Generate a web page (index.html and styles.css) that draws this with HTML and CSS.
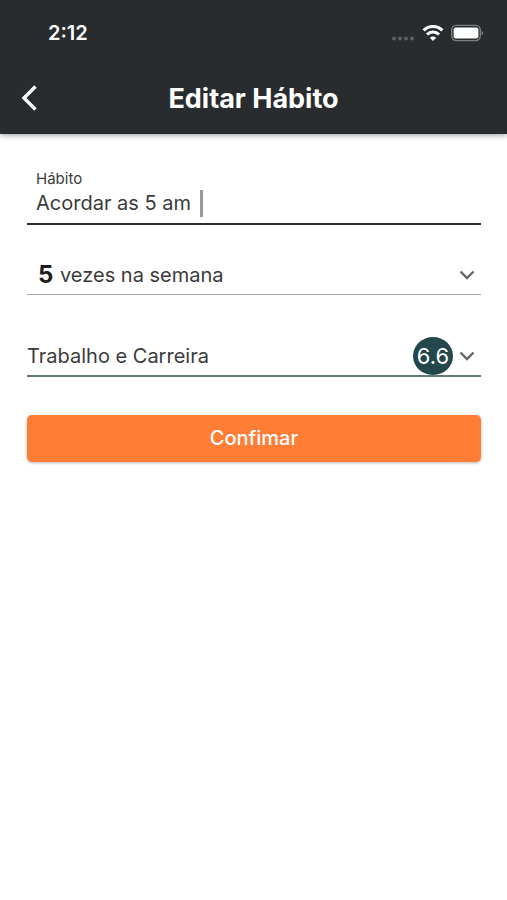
FILE: index.html
```html
<!DOCTYPE html>
<html lang="pt-BR">
<head>
    <meta charset="UTF-8">
    <meta name="viewport" content="width=device-width, initial-scale=1.0">
    <title>Editar Hábito</title>
    <link rel="stylesheet" href="styles.css">
</head>
<body>
    <header class="header">
        <div class="status-bar">
            <span class="time">2:12</span>
            <div class="status-icons">
                <svg width="24" height="18" viewBox="0 0 24 18" fill="#5c6062">
                    <circle cx="3" cy="14.5" r="2"/>
                    <circle cx="9" cy="14.5" r="2"/>
                    <circle cx="15" cy="14.5" r="2"/>
                    <circle cx="21" cy="14.5" r="2"/>
                </svg>
                <svg width="22" height="18" viewBox="0 0 22 18" fill="none" stroke="#fff" stroke-width="3.2">
                    <path d="M1.6 6.4a13.3 13.3 0 0 1 18.8 0"/>
                    <path d="M5 10.5a8.4 8.4 0 0 1 12 0"/>
                    <path d="M11 17l-3.1-3.2a4.4 4.4 0 0 1 6.2 0z" fill="#fff" stroke="none"/>
                </svg>
                <svg width="34" height="18" viewBox="0 0 34 18">
                    <rect x="0.7" y="1.4" width="28.6" height="15.2" rx="4.5" fill="none" stroke="#7b7e80" stroke-width="1.4"/>
                    <rect x="2.6" y="3.6" width="24.8" height="10.8" rx="2" fill="#fff"/>
                    <path d="M30.6 6.7c2.2.8 2.2 3.8 0 4.6z" fill="#7b7e80"/>
                </svg>
            </div>
        </div>
        <div class="title-bar">
            <button type="button" class="back" aria-label="Voltar">
                <svg width="18" height="28" viewBox="0 0 18 28" fill="none" stroke="#fff" stroke-width="3.4">
                    <path d="M15.5 2.5L4 14l11.5 11.5"/>
                </svg>
            </button>
            <h1>Editar Hábito</h1>
        </div>
    </header>

    <form class="habit-form">
        <div class="field field-name">
            <label for="habit">Hábito</label>
            <div class="input-row">
                <input type="text" id="habit" value="Acordar as 5 am">
                <span class="caret"></span>
            </div>
        </div>

        <div class="field field-times">
            <select id="times" aria-label="Quantidade">
                <option>1</option>
                <option>2</option>
                <option>3</option>
                <option>4</option>
                <option selected>5</option>
                <option>6</option>
                <option>7</option>
            </select>
            <label for="times" class="suffix">vezes na semana</label>
            <svg class="chevron" width="16" height="10" viewBox="0 0 16 10" fill="none" stroke="#666" stroke-width="2.4">
                <path d="M1.5 1.5L8 8l6.5-6.5"/>
            </svg>
        </div>

        <div class="field field-area">
            <select id="area" aria-label="Área">
                <option selected>Trabalho e Carreira</option>
            </select>
            <span class="score">6.6</span>
            <svg class="chevron" width="16" height="10" viewBox="0 0 16 10" fill="none" stroke="#666" stroke-width="2.4">
                <path d="M1.5 1.5L8 8l6.5-6.5"/>
            </svg>
        </div>

        <button type="submit" class="confirm">Confimar</button>
    </form>
</body>
</html>
```

FILE: styles.css
```css
* {
    box-sizing: border-box;
}
body {
    margin: 0;
    background: #fff;
    color: #3b3b3b;
    font-family: Inter, Roboto, sans-serif;
    font-size: 20px;
}
input, select, button {
    margin: 0;
    padding: 0;
    border: 0;
    outline: 0;
    background: none;
    color: inherit;
    font: inherit;
}
svg {
    display: block;
}

/* Header */
.header {
    background: #292c2e;
    color: #fff;
    box-shadow: 0 1px 6px rgba(0, 0, 0, 0.4);
}
.status-bar {
    display: flex;
    justify-content: space-between;
    align-items: center;
    height: 62px;
    padding: 4px 22px 0 48px;
}
.time {
    font-weight: 600;
}
.status-icons {
    display: flex;
    gap: 7px;
}
.title-bar {
    display: grid;
    grid-template-columns: 40px 1fr 40px;
    align-items: center;
    height: 72px;
    padding: 0 20px;
}
.back {
    cursor: pointer;
}
h1 {
    margin: 0;
    font-size: 27px;
    font-weight: 700;
    text-align: center;
}

/* Form */
.habit-form {
    display: flex;
    flex-direction: column;
    padding: 36px 26px 36px 27px;
}
.field-name {
    height: 55px;
    padding-left: 9px;
    border-bottom: 2px solid #292c2e;
}
.field-name label {
    display: block;
    font-size: 15px;
    line-height: 18px;
}
.input-row {
    display: flex;
    align-items: center;
    height: 30px;
}
.input-row input {
    field-sizing: content;
}
.caret {
    width: 3px;
    height: 27px;
    margin-left: 9px;
    background: #999;
}
.field-times,
.field-area {
    display: grid;
    grid-template-columns: 1fr auto 16px;
    align-items: center;
    column-gap: 6px;
    padding-right: 6px;
}
.field-times {
    height: 70px;
    padding-top: 30px;
    border-bottom: 1px solid #aaa;
}
.field-area {
    height: 82px;
    padding-top: 42px;
    border-bottom: 2px solid #5f7c7c;
}
.field select {
    grid-area: 1 / 1 / 2 / 4;
    height: 38px;
    appearance: none;
    cursor: pointer;
}
.field-times select {
    padding-left: 11px;
    color: #1c1c1c;
    font-size: 24px;
    font-weight: 700;
}
.suffix {
    grid-area: 1 / 1 / 2 / 3;
    padding-left: 33px;
    pointer-events: none;
}
.score {
    grid-area: 1 / 2 / 2 / 3;
    width: 40px;
    height: 38px;
    border-radius: 50%;
    background: #24474c;
    color: #fff;
    font-size: 22px;
    line-height: 38px;
    text-align: center;
    pointer-events: none;
}
.chevron {
    grid-area: 1 / 3 / 2 / 4;
    pointer-events: none;
}
.confirm {
    height: 47px;
    padding-bottom: 2px;
    margin-top: 38px;
    border-radius: 5px;
    background: #ff7d35;
    box-shadow: 0 1px 3px rgba(0, 0, 0, 0.3);
    color: #fff;
    font-weight: 500;
    cursor: pointer;
}
```
